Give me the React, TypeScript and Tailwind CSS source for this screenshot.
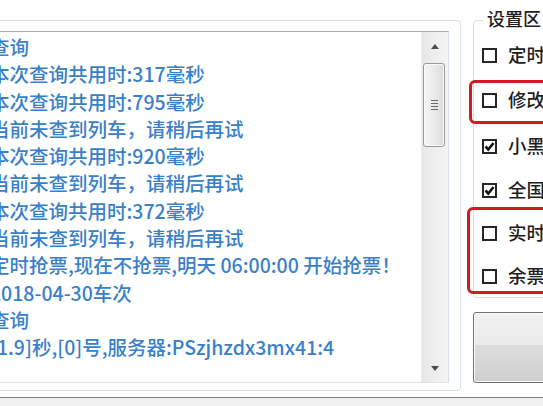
const logLines = [
  '查询',
  '本次查询共用时:317毫秒',
  '本次查询共用时:795毫秒',
  '当前未查到列车，请稍后再试',
  '本次查询共用时:920毫秒',
  '当前未查到列车，请稍后再试',
  '本次查询共用时:372毫秒',
  '当前未查到列车，请稍后再试',
  '定时抢票,现在不抢票,明天 06:00:00 开始抢票！',
  '2018-04-30车次',
  '查询',
  '[1.9]秒,[0]号,服务器:PSzjhzdx3mx41:4',
]

const options = [
  { label: '定时抢票', checked: false, mt: 'mt-[12px]' },
  { label: '修改乘车人', checked: false, mt: 'mt-[17px]' },
  { label: '小黑屋', checked: true, mt: 'mt-[18px]' },
  { label: '全国车站', checked: true, mt: 'mt-[16px]' },
  { label: '实时刷新', checked: false, mt: 'mt-[15px]' },
  { label: '余票提醒', checked: false, mt: 'mt-[15px]' },
]

function Arrow({ down }: { down?: boolean }) {
  return (
    <svg width="8" height="5" viewBox="0 0 8 5">
      <path d={down ? 'M0 0 L8 0 L4 5 Z' : 'M0 5 L8 5 L4 0 Z'} fill="#4d4d4d" />
    </svg>
  )
}

function ScrollBar() {
  return (
    <div className="w-[27px] h-full flex flex-col bg-[linear-gradient(to_right,#e8e8e8,#f4f4f4)] border-l border-[#eeeeee]">
      <div className="h-[28px] flex items-center justify-center">
        <Arrow />
      </div>
      <div className="mt-[3px] ml-[1px] w-[22px] h-[84px] rounded-[3px] border border-[#9a9a9a] bg-[linear-gradient(to_right,#f5f5f5,#e8e8e8_60%,#dbdbdb)] shadow-[inset_0_0_0_1px_#fafafa] flex flex-col items-center justify-center gap-[2px]">
        <div className="w-[7px] h-px bg-[#6a6a6a]" />
        <div className="w-[7px] h-px bg-[#6a6a6a]" />
        <div className="w-[7px] h-px bg-[#6a6a6a]" />
        <div className="w-[7px] h-px bg-[#6a6a6a]" />
      </div>
      <div className="flex-1" />
      <div className="h-[28px] flex items-center justify-center">
        <Arrow down />
      </div>
    </div>
  )
}

function CheckBox({ checked }: { checked: boolean }) {
  return (
    <div className="w-[15px] h-[15px] border-2 border-[#262626] bg-white flex items-center justify-center shrink-0">
      {checked && (
        <svg width="11" height="11" viewBox="0 0 11 11">
          <path d="M1.5 5.5 L4.3 8.5 L9.5 2" fill="none" stroke="#111" strokeWidth="2.6" />
        </svg>
      )}
    </div>
  )
}

export default function App() {
  return (
    <div className="w-[543px] h-[406px] overflow-hidden bg-white font-['Noto_Sans_CJK_SC','Noto_Sans',sans-serif]">
      <div className="flex items-start ml-[-31px] pt-[20px]">
        {/* 日志区 */}
        <div className="w-[492px] h-[371px] shrink-0 rounded-[4px] border border-[#d5dfe5]">
          <div className="ml-[9px] mt-[10px] w-[470px] h-[352px] flex border border-[#dbe1e8] border-t-[#abadb3]">
            <div className="flex-1 overflow-hidden pl-[10px] pt-[1px] text-[19.5px] font-medium leading-[27.3px] text-[#3a80c9] whitespace-nowrap">
              {logLines.map((line, i) => (
                <div key={i}>{line}</div>
              ))}
            </div>
            <ScrollBar />
          </div>
        </div>

        {/* 设置区 */}
        <div className="ml-[12px] w-[220px] shrink-0 flex flex-col">
          <div className="relative rounded-[4px] border border-[#d5dfe5] pl-[8px] pb-[7px] flex flex-col">
            <span className="-mt-[14px] ml-[1px] self-start bg-white px-[4px] text-[18px] font-medium leading-[22px] text-[#1e1e1e]">
              设置区
            </span>
            {options.map((o) => (
              <div key={o.label} className={`${o.mt} h-[28px] flex items-center gap-[11px] whitespace-nowrap`}>
                <CheckBox checked={o.checked} />
                <span className="text-[18.5px] font-medium text-[#1e1e1e]">{o.label}</span>
              </div>
            ))}
            <div className="absolute left-[-5px] top-[59px] w-[230px] h-[44px] rounded-[6px] border-[3px] border-[#cf1b23]" />
            <div className="absolute left-[-7px] top-[186px] w-[230px] h-[87px] rounded-[6px] border-[3px] border-[#cf1b23]" />
          </div>
          <button className="mt-[14px] w-[220px] h-[71px] rounded-[3px] border border-[#707070] bg-[linear-gradient(to_bottom,#f2f2f2_0%,#ebebeb_46%,#dddddd_47%,#cfcfcf_100%)] shadow-[inset_0_0_0_1px_#fbfbfb]" />
        </div>
      </div>
      <div className="mt-[6px] h-[20px] border-t border-[#7c7c7c] bg-[#f0f0f0]" />
    </div>
  )
}
